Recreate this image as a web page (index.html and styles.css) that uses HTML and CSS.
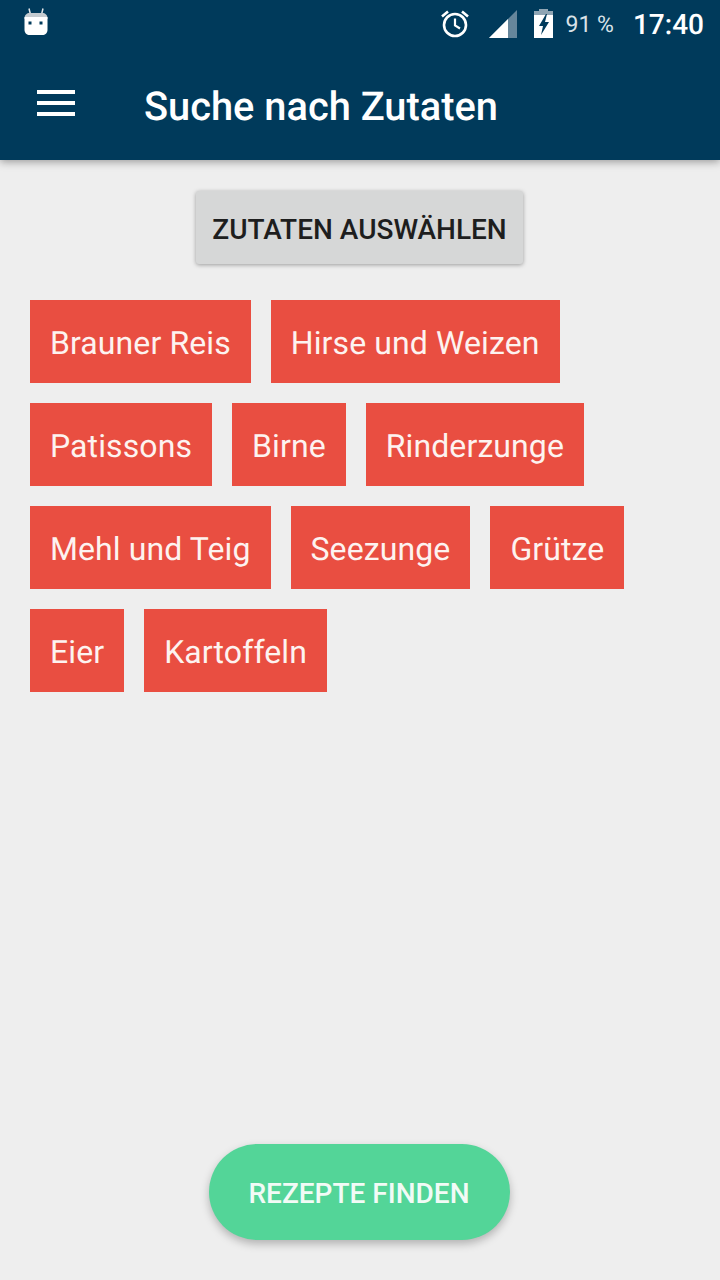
FILE: index.html
```html
<!DOCTYPE html>
<html lang="de">
<head>
<meta charset="UTF-8">
<title>Suche nach Zutaten</title>
<link rel="stylesheet" href="styles.css">
</head>
<body>
<div class="screen">
	<header class="appbar">
		<div class="statusbar">
			<svg class="ic-bot" width="24" height="28" viewBox="0 0 24 28">
				<path d="M5 0.5l1.5 6M19 0.5l-1.5 6" stroke="#dfe4e8" stroke-width="1.5" fill="none"/>
				<path d="M0.5 10c0-3 2.5-5 5-5h13c2.500 0 5 2 5 5v1H0.500z" fill="#c4cbd0"/>
				<path d="M0.500 9h23v13c0 3-2.500 5-5 5H5.500c-2.500 0-5-2-5-5z" fill="#fff"/>
				<rect x="4.500" y="13.500" width="3" height="3" fill="#003a5b"/>
				<rect x="15.500" y="13.500" width="3" height="3" fill="#003a5b"/>
			</svg>
			<div class="status-right">
				<svg class="ic-alarm" width="30" height="30" viewBox="0 0 30 30">
					<circle cx="15" cy="16" r="11" fill="none" stroke="#fff" stroke-width="2.600"/>
					<path d="M15 9.500V16.500l5 3" fill="none" stroke="#fff" stroke-width="2.200"/>
					<path d="M2 7.500L8 2.500M28 7.500L22 2.500" stroke="#fff" stroke-width="2.600"/>
				</svg>
				<svg class="ic-signal" width="28" height="28" viewBox="0 0 28 28">
					<path d="M0 28L28 0V28z" fill="#66869b"/>
					<path d="M0 28L19 9V28z" fill="#fff"/>
				</svg>
				<svg class="ic-battery" width="19" height="29" viewBox="0 0 19 29">
					<path d="M5 0h9v3H5z" fill="#8fa5b4"/>
					<path d="M0 2h19v4H0z" fill="#8fa5b4"/>
					<path d="M0 6h19v23H0z" fill="#fff"/>
					<path d="M12 5L5 17h4l-2 9 8-13h-4l2-8z" fill="#003a5b"/>
				</svg>
				<span class="battery-text">91 %</span>
				<span class="clock">17:40</span>
			</div>
		</div>
		<div class="toolbar">
			<div class="hamburger"><i></i><i></i><i></i></div>
			<h1 class="title">Suche nach Zutaten</h1>
		</div>
	</header>

	<main class="content">
		<button class="btn-select">ZUTATEN AUSWÄHLEN</button>
		<div class="tags">
			<span class="tag">Brauner Reis</span>
			<span class="tag">Hirse und Weizen</span>
			<span class="tag">Patissons</span>
			<span class="tag">Birne</span>
			<span class="tag">Rinderzunge</span>
			<span class="tag">Mehl und Teig</span>
			<span class="tag">Seezunge</span>
			<span class="tag">Grütze</span>
			<span class="tag">Eier</span>
			<span class="tag">Kartoffeln</span>
		</div>
	</main>

	<div class="footer">
		<button class="btn-find">REZEPTE FINDEN</button>
	</div>
</div>
</body>
</html>
```

FILE: styles.css
```css
html, body {
	margin: 0;
	padding: 0;
}

body {
	background-color: #eeeeee;
	font-family: Roboto, "Liberation Sans", sans-serif;
	text-rendering: geometricPrecision;
}

.screen {
	width: 720px;
	height: 1280px;
	display: flex;
	flex-direction: column;
	overflow: hidden;
}

.appbar {
	height: 160px;
	flex: none;
	background-color: #003a5b;
	box-shadow: 0 2px 8px rgba(0, 0, 0, 0.35);
	color: #fff;
}

.statusbar {
	height: 48px;
	display: flex;
	justify-content: space-between;
	padding: 0 16px 0 24px;
}

.ic-bot {
	margin-top: 8px;
}

.status-right {
	display: flex;
	align-items: flex-start;
}

.ic-alarm {
	margin: 9px 0 0 0;
}

.ic-signal {
	margin: 10px 0 0 19px;
}

.ic-battery {
	margin: 9px 0 0 17px;
}

.battery-text {
	font-size: 23px;
	line-height: 28px;
	margin: 11px 0 0 13px;
	color: #d9e2e8;
}

.clock {
	font-size: 28px;
	font-weight: 500;
	line-height: 32px;
	margin: 9px 0 0 19px;
}

.toolbar {
	height: 112px;
	display: flex;
	align-items: flex-start;
}

.hamburger {
	width: 38px;
	margin: 42px 0 0 37px;
	display: flex;
	flex-direction: column;
	gap: 7px;
}

.hamburger i {
	display: block;
	height: 4px;
	background-color: #fff;
}

.title {
	margin: 35px 0 0 69px;
	font-size: 39.8px;
	font-weight: 500;
	line-height: 48px;
}

.content {
	flex: 1;
	display: flex;
	flex-direction: column;
	align-items: center;
	padding-top: 31px;
}

.btn-select {
	width: 327px;
	height: 73px;
	margin-right: 1px;
	border: 0;
	border-radius: 3px;
	background-color: #d6d7d7;
	box-shadow: 0 1px 4px rgba(0, 0, 0, 0.35);
	color: #1e1e1e;
	font-family: inherit;
	font-size: 28px;
	font-weight: 500;
	padding: 3px 0 0;
}

.tags {
	align-self: stretch;
	display: flex;
	flex-wrap: wrap;
	gap: 20px;
	padding: 36px 30px 0;
}

.tag {
	height: 83px;
	line-height: 87px;
	padding: 0 20px;
	background-color: #e94e41;
	color: #fdf3f0;
	font-size: 32px;
	letter-spacing: 0.1px;
}

.footer {
	flex: none;
	display: flex;
	justify-content: center;
	padding: 0 2px 40px 0;
}

.btn-find {
	width: 301px;
	height: 96px;
	border: 0;
	border-radius: 48px;
	background-color: #53d598;
	box-shadow: 0 4px 8px rgba(0, 0, 0, 0.25);
	color: #f2fbf6;
	font-family: inherit;
	font-size: 28px;
	font-weight: 500;
	padding: 2px 0 0;
}
```
